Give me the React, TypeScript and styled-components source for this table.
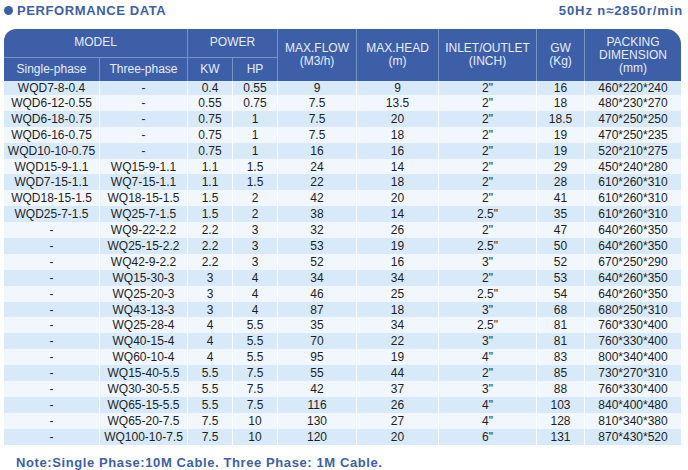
import React from "react";
import styled, { createGlobalStyle } from "styled-components";

const GlobalStyle = createGlobalStyle`
  html, body { margin: 0; padding: 0; background: #ffffff; }
  body { font-family: "Liberation Sans", Arial, sans-serif; }
`;

const COLS = "96px 88px 45px 45px 79px 82px 98px 48px 96px";
const BLUE = "#3d5fa8";

const Page = styled.div`
  width: 688px;
  height: 470px;
  box-sizing: border-box;
  padding: 0 7px 0 4px;
  display: flex;
  flex-direction: column;
`;

const TitleBar = styled.div`
  height: 20px;
  display: flex;
  align-items: center;
  justify-content: space-between;
  margin-bottom: 9px;
`;

const Title = styled.div`
  display: flex;
  align-items: center;
  gap: 4px;
  color: ${BLUE};
  font-weight: 700;
  font-size: 13px;
  letter-spacing: 0.6px;
`;

const Dot = styled.span`
  width: 9px;
  height: 9px;
  border-radius: 50%;
  background: ${BLUE};
  display: inline-block;
`;

const Freq = styled.div`
  color: ${BLUE};
  font-weight: 700;
  font-size: 13px;
  letter-spacing: 0.9px;
  margin-right: -2px;
`;

const Header = styled.div`
  display: grid;
  grid-template-columns: ${COLS};
  grid-template-rows: 28.5px 23.5px;
  background: ${BLUE};
  border-radius: 12px 15px 0 0;
  overflow: hidden;
`;

const HCell = styled.div<{ $col: string; $row: string; $last?: boolean; $bottom?: boolean }>`
  grid-column: ${(p) => p.$col};
  grid-row: ${(p) => p.$row};
  box-sizing: border-box;
  border-right: ${(p) => (p.$last ? "none" : "1px solid #7a93c7")};
  border-bottom: ${(p) => (p.$bottom ? "1px solid #7a93c7" : "none")};
  display: flex;
  align-items: center;
  justify-content: center;
  text-align: center;
  color: #e6ecf7;
  font-size: 12px;
  line-height: 13px;
`;

const Body = styled.div`
  display: flex;
  flex-direction: column;
`;

const Row = styled.div<{ $odd: boolean; $first: boolean }>`
  display: grid;
  grid-template-columns: ${COLS};
  height: ${(p) => (p.$first ? "14px" : "15.9px")};
  background: ${(p) => (p.$odd ? "#d8eaf9" : "#f1f7fd")};
`;

const Cell = styled.div<{ $last?: boolean }>`
  box-sizing: border-box;
  border-right: ${(p) => (p.$last ? "none" : "1px solid #ffffff")};
  display: flex;
  align-items: center;
  justify-content: center;
  color: #1e1e1e;
  font-size: 12px;
  white-space: nowrap;
`;

const Note = styled.div`
  margin-top: 10px;
  padding-left: 12px;
  color: ${BLUE};
  font-weight: 700;
  font-size: 13px;
  letter-spacing: 0.6px;
  line-height: 15px;
`;

const data: string[][] = [
  ["WQD7-8-0.4", "-", "0.4", "0.55", "9", "9", '2"', "16", "460*220*240"],
  ["WQD6-12-0.55", "-", "0.55", "0.75", "7.5", "13.5", '2"', "18", "480*230*270"],
  ["WQD6-18-0.75", "-", "0.75", "1", "7.5", "20", '2"', "18.5", "470*250*250"],
  ["WQD6-16-0.75", "-", "0.75", "1", "7.5", "18", '2"', "19", "470*250*235"],
  ["WQD10-10-0.75", "-", "0.75", "1", "16", "16", '2"', "19", "520*210*275"],
  ["WQD15-9-1.1", "WQ15-9-1.1", "1.1", "1.5", "24", "14", '2"', "29", "450*240*280"],
  ["WQD7-15-1.1", "WQ7-15-1.1", "1.1", "1.5", "22", "18", '2"', "28", "610*260*310"],
  ["WQD18-15-1.5", "WQ18-15-1.5", "1.5", "2", "42", "20", '2"', "41", "610*260*310"],
  ["WQD25-7-1.5", "WQ25-7-1.5", "1.5", "2", "38", "14", '2.5"', "35", "610*260*310"],
  ["-", "WQ9-22-2.2", "2.2", "3", "32", "26", '2"', "47", "640*260*350"],
  ["-", "WQ25-15-2.2", "2.2", "3", "53", "19", '2.5"', "50", "640*260*350"],
  ["-", "WQ42-9-2.2", "2.2", "3", "52", "16", '3"', "52", "670*250*290"],
  ["-", "WQ15-30-3", "3", "4", "34", "34", '2"', "53", "640*260*350"],
  ["-", "WQ25-20-3", "3", "4", "46", "25", '2.5"', "54", "640*260*350"],
  ["-", "WQ43-13-3", "3", "4", "87", "18", '3"', "68", "680*250*310"],
  ["-", "WQ25-28-4", "4", "5.5", "35", "34", '2.5"', "81", "760*330*400"],
  ["-", "WQ40-15-4", "4", "5.5", "70", "22", '3"', "81", "760*330*400"],
  ["-", "WQ60-10-4", "4", "5.5", "95", "19", '4"', "83", "800*340*400"],
  ["-", "WQ15-40-5.5", "5.5", "7.5", "55", "44", '2"', "85", "730*270*310"],
  ["-", "WQ30-30-5.5", "5.5", "7.5", "42", "37", '3"', "88", "760*330*400"],
  ["-", "WQ65-15-5.5", "5.5", "7.5", "116", "26", '4"', "103", "840*400*480"],
  ["-", "WQ65-20-7.5", "7.5", "10", "130", "27", '4"', "128", "810*340*380"],
  ["-", "WQ100-10-7.5", "7.5", "10", "120", "20", '6"', "131", "870*430*520"],
];

export default function App() {
  return (
    <>
      <GlobalStyle />
      <Page>
        <TitleBar>
          <Title>
            <Dot />
            PERFORMANCE DATA
          </Title>
          <Freq>50Hz n≈2850r/min</Freq>
        </TitleBar>
        <Header>
          <HCell $col="1 / 3" $row="1" $bottom>MODEL</HCell>
          <HCell $col="3 / 5" $row="1" $bottom>POWER</HCell>
          <HCell $col="5" $row="1 / 3">MAX.FLOW<br />(M3/h)</HCell>
          <HCell $col="6" $row="1 / 3">MAX.HEAD<br />(m)</HCell>
          <HCell $col="7" $row="1 / 3">INLET/OUTLET<br />(INCH)</HCell>
          <HCell $col="8" $row="1 / 3">GW<br />(Kg)</HCell>
          <HCell $col="9" $row="1 / 3" $last>PACKING<br />DIMENSION<br />(mm)</HCell>
          <HCell $col="1" $row="2">Single-phase</HCell>
          <HCell $col="2" $row="2">Three-phase</HCell>
          <HCell $col="3" $row="2">KW</HCell>
          <HCell $col="4" $row="2">HP</HCell>
        </Header>
        <Body>
          {data.map((r, i) => (
            <Row key={i} $odd={i % 2 === 0} $first={i === 0}>
              {r.map((c, j) => (
                <Cell key={j} $last={j === r.length - 1}>{c}</Cell>
              ))}
            </Row>
          ))}
        </Body>
        <Note>Note:Single Phase:10M Cable. Three Phase: 1M Cable.</Note>
      </Page>
    </>
  );
}
